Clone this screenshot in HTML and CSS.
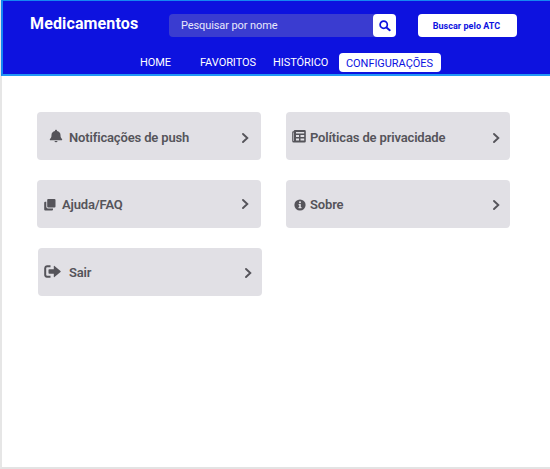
FILE: index.html
```html
<!DOCTYPE html>
<html lang="pt">
<head>
<meta charset="utf-8">
<title>Medicamentos</title>
<link rel="stylesheet" href="styles.css">
</head>
<body>
<div class="app">
  <header class="header">
    <div class="top">
      <h1 class="brand">Medicamentos</h1>
      <div class="search">
        <span class="search-text">Pesquisar por nome</span>
        <button class="search-btn" aria-label="Pesquisar">
          <svg width="12" height="12" viewBox="0 0 12 12" fill="none" stroke="currentColor"><circle cx="4.700" cy="4.700" r="3.600" stroke-width="1.700"/><path d="M7.500 7.500L10.700 10.200" stroke-width="2" stroke-linecap="round"/></svg>
        </button>
      </div>
      <button class="atc">Buscar pelo ATC</button>
    </div>
    <nav class="nav">
      <a class="home">HOME</a>
      <a class="fav">FAVORITOS</a>
      <a class="hist">HISTÓRICO</a>
      <a class="active">CONFIGURAÇÕES</a>
    </nav>
  </header>
  <main class="cards">
    <a class="card push">
      <svg class="icon" width="14" height="14" viewBox="0 0 14 14" fill="currentColor"><path d="M7 .7c.6 0 1 .4 1 1v.3c2.200.4 3.500 2 3.500 4 0 2.200.6 3.200 1.500 4 .5.500.2 1.300-.5 1.300H1.500c-.7 0-1-.8-.5-1.300.9-.8 1.500-1.800 1.500-4 0-2 1.300-3.600 3.500-4v-.3c0-.6.4-1 1-1z"/><path d="M5.500 12h3a1.500 1.300 0 0 1-3 0z"/></svg>
      <span class="label">Notificações de push</span>
      <svg class="chevron" width="8" height="12" viewBox="0 0 8 12"><path d="M2 2L6.300 6L2 10"/></svg>
    </a>
    <a class="card privacy">
      <svg class="icon" width="14" height="13" viewBox="0 0 14 13"><path fill="currentColor" fill-rule="evenodd" d="M3 0h9.500A1.300 1.300 0 0 1 13.800 1.300v9.900a1.300 1.300 0 0 1-1.300 1.300H1.700A1.500 1.500 0 0 1 .2 11V2.300A1 1 0 0 1 1.200 1.300h.5A1.300 1.300 0 0 1 3 0zM1.400 2.600v8.200a.3.300 0 0 0 .6 0V2.600zM4 2v1.600h8.200V2zM4 5.100v1.800h3V5.100zM8.500 5.100v1.800h3.700V5.100zM4 8.600v1.800h3V8.600zM8.500 8.600v1.800h3.700V8.600z"/></svg>
      <span class="label">Políticas de privacidade</span>
      <svg class="chevron" width="8" height="12" viewBox="0 0 8 12"><path d="M2 2L6.300 6L2 10"/></svg>
    </a>
    <a class="card faq">
      <svg class="icon" width="12" height="12" viewBox="0 0 12 12" fill="currentColor"><rect x="3.200" y="0" width="8.300" height="8.500" rx="1"/><path d="M2.300 2.700H1.200a1 1 0 0 0-1 1v6.800a1 1 0 0 0 1 1H8a1 1 0 0 0 1-1v-1H4a1.700 1.700 0 0 1-1.700-1.700z"/></svg>
      <span class="label">Ajuda/FAQ</span>
      <svg class="chevron" width="8" height="12" viewBox="0 0 8 12"><path d="M2 2L6.300 6L2 10"/></svg>
    </a>
    <a class="card about">
      <svg class="icon" width="12" height="12" viewBox="0 0 12 12"><circle cx="6" cy="6" r="5.600" fill="currentColor"/><circle cx="6" cy="3.300" r="1" fill="#e1e0e5"/><path fill="#e1e0e5" d="M4.600 5h2.200v3h.7v1.200h-3V8h.7V6.200h-.6z"/></svg>
      <span class="label">Sobre</span>
      <svg class="chevron" width="8" height="12" viewBox="0 0 8 12"><path d="M2 2L6.300 6L2 10"/></svg>
    </a>
    <a class="card exit">
      <svg class="icon" width="18" height="13" viewBox="0 0 18 13"><path d="M6.500 1.200H3A2 2 0 0 0 1.200 3v6.800a2 2 0 0 0 1.800 2h3.500" fill="none" stroke="currentColor" stroke-width="2"/><path d="M5.300 4.200h4.500V1.300q0-.8.700-.3l6 5q.5.500 0 1l-6 5q-.7.500-.7-.3V8.800H5.300q-.8 0-.8-.8V5q0-.8.800-.8z" fill="currentColor"/></svg>
      <span class="label">Sair</span>
      <svg class="chevron" width="8" height="12" viewBox="0 0 8 12"><path d="M2 2L6.300 6L2 10"/></svg>
    </a>
  </main>
</div>
</body>
</html>
```
FILE: styles.css
```css
* { box-sizing: border-box; }
body { margin: 0; background: #fff; font-family: Roboto, sans-serif; }
.app { height: 469px; border-left: 2px solid #e6e6e6; border-bottom: 2px solid #e3e3e3; }
.header {
  height: 76px;
  margin-left: -1px;
  background: #0d12df;
  border: 1px solid #1587f2;
  border-right: 0;
  border-left-width: 2px;
  border-bottom: 2px solid #2298f5;
}
.top { display: flex; align-items: flex-start; padding: 13px 0 0 27px; height: 52px; }
.brand { margin: 0; width: 139px; font-size: 16px; line-height: 20px; font-weight: 700; letter-spacing: .13px; color: #fff; white-space: nowrap; }
.search { display: flex; align-items: center; justify-content: space-between; width: 227px; height: 23px; border-radius: 4px; background: #3a3cd0; }
.search-text { padding-left: 12px; font-size: 11px; line-height: 14px; letter-spacing: -.1px; color: #e8e8fb; white-space: nowrap; }
button { border: 0; padding: 0; font-family: inherit; background: #fff; color: #0d12df; border-radius: 4px; height: 23px; }
.search-btn { width: 23px; display: flex; align-items: center; justify-content: center; }
.atc { width: 99px; margin-left: 22px; padding: 1px 2px 0 0; font-size: 9px; font-weight: 700; letter-spacing: .04px; white-space: nowrap; }
.nav { display: flex; align-items: flex-start; padding-left: 137px; font-size: 11px; line-height: 19px; letter-spacing: -.06px; color: #fff; white-space: nowrap; }
.home { width: 60px; }
.fav { width: 73px; }
.hist { width: 66px; }
.active { width: 102px; height: 19px; padding: 1px 0 0 7px; background: #fff; color: #0d12df; border-radius: 4px; }
.cards { display: grid; grid-template-columns: 224px 224px; column-gap: 25px; row-gap: 20px; padding: 36px 0 0 35px; }
.card { display: flex; align-items: center; height: 48px; border-radius: 4px; background: #e1e0e5; color: #55545a; }
.label { flex: 1; padding-top: 4px; font-size: 13px; line-height: 16px; font-weight: 600; letter-spacing: -.15px; white-space: nowrap; }
.icon { flex: none; }
.chevron { flex: none; margin: 4px 12px 0 0; fill: none; stroke: currentColor; stroke-width: 1.900; stroke-linecap: round; }
.push { padding-left: 12px; }
.push .icon { margin: 0 6px 0 0; }
.privacy { padding-left: 6px; }
.privacy .icon { margin-right: 4px; }
.privacy .chevron, .about .chevron { margin-right: 10px; }
.faq { padding-left: 7px; }
.faq .icon { margin: 1px 6px 0 0; }
.faq .label, .about .label, .exit .label { padding-top: 2px; }
.faq .chevron { margin-top: 0; }
.about { padding-left: 8px; }
.about .icon { margin: 1px 4px 0 0; }
.about .chevron { margin-top: 1px; }
.exit { margin: 0 -1px 0 1px; padding-left: 6px; }
.exit .icon { margin: -1px 7px 0 0; }
.exit .chevron { margin: 2px 10px 0 0; }
```
